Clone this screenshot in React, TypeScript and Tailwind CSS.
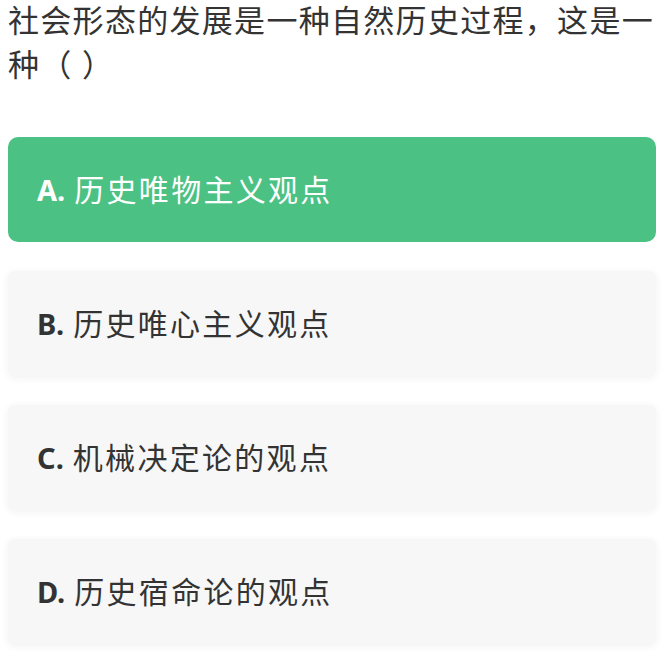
import React from "react";

const options = [
  { key: "A", text: "历史唯物主义观点", active: true },
  { key: "B", text: "历史唯心主义观点", active: false },
  { key: "C", text: "机械决定论的观点", active: false },
  { key: "D", text: "历史宿命论的观点", active: false },
];

export default function App() {
  return (
    <div
      className="w-[664px] h-[658px] bg-white overflow-hidden"
      style={{ fontFamily: '"Noto Sans", "Noto Sans CJK SC", sans-serif' }}
    >
      <p className="pl-[8px] pr-[2px] -mt-[2px] text-[31px] leading-[44px] tracking-[1.3px] text-[#333333]">
        社会形态的发展是一种自然历史过程，这是一种（ ）
      </p>
      <div className="mt-[51px] flex flex-col gap-[29px] px-[8px]">
        {options.map((o) => (
          <div
            key={o.key}
            className={
              o.active
                ? "h-[105px] rounded-[10px] bg-[#4cc184] flex items-center pl-[29px] text-white text-[30px]"
                : "h-[105px] rounded-[6px] bg-[#f7f7f7] shadow-[0_2px_8px_rgba(0,0,0,0.06)] flex items-center pl-[29px] text-[#333333] text-[30px]"
            }
          >
            <span className="font-bold mr-[9px] text-[29px]">{o.key}.</span>
            <span className="tracking-[2.3px]">{o.text}</span>
          </div>
        ))}
      </div>
    </div>
  );
}
